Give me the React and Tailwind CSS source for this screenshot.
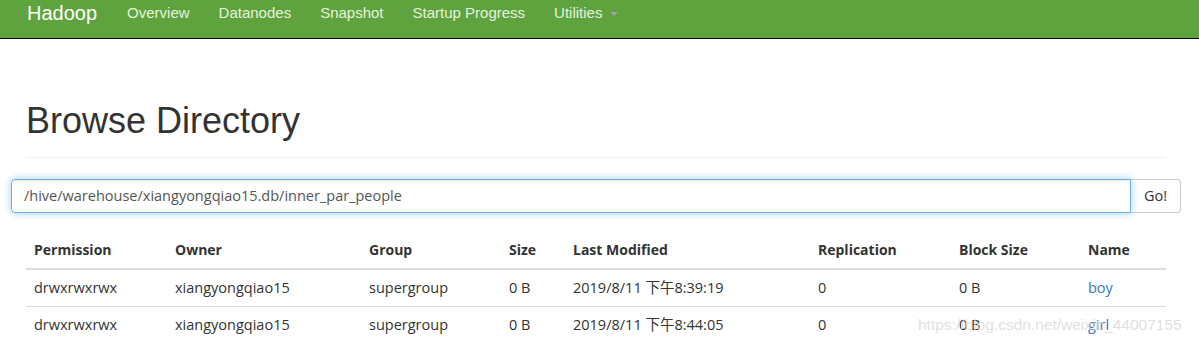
import React from "react";

const navItems = ["Overview", "Datanodes", "Snapshot", "Startup Progress"];

const files = [
  { perm: "drwxrwxrwx", owner: "xiangyongqiao15", group: "supergroup", size: "0 B", modified: "2019/8/11 下午8:39:19", repl: "0", block: "0 B", name: "boy" },
  { perm: "drwxrwxrwx", owner: "xiangyongqiao15", group: "supergroup", size: "0 B", modified: "2019/8/11 下午8:44:05", repl: "0", block: "0 B", name: "girl" },
];

// column widths measured from the screenshot
const cols = ["w-[141px]", "w-[194px]", "w-[140px]", "w-[64px]", "w-[245px]", "w-[141px]", "w-[129px]", ""];

const Navbar = () => (
  <div className="h-[39px] bg-[#5fa33e] border-b border-black flex items-start pt-[3px] font-['Liberation_Sans',Arial,sans-serif]">
    <span className="ml-[27px] text-[20px] leading-[20px] text-white mr-[30px]">Hadoop</span>
    {navItems.map((item) => (
      <span key={item} className="text-[15px] leading-[20px] text-[#e6f2df] mr-[29px]">
        {item}
      </span>
    ))}
    <span className="text-[15px] leading-[20px] text-[#e6f2df] flex items-center">
      Utilities
      <span className="ml-[8px] mt-[2px] w-0 h-0 border-l-[4px] border-r-[4px] border-t-[4px] border-l-transparent border-r-transparent border-t-[#a0a0a0]" />
    </span>
  </div>
);

const App = () => {
  return (
    <div className="relative w-[1199px] h-[343px] bg-white overflow-hidden">
      <Navbar />
      <div className="px-[26px]">
        <h1 className="mt-[62px] text-[36px] leading-[40px] text-[#333] font-['Liberation_Sans',Arial,sans-serif]">
          Browse Directory
        </h1>
        <div className="mt-[16px] mr-[7px] border-t border-[#eee]" />
      </div>
      <div className="mt-[21px] mx-[11px] mr-[18px] flex font-['Open_Sans','Noto_Sans_CJK_SC',sans-serif] text-[14.5px] text-[#555]">
        <div className="flex-1 h-[34px] border border-[#66afe9] rounded-l-[4px] shadow-[inset_0_1px_1px_rgba(0,0,0,0.075),0_0_8px_rgba(102,175,233,0.6)] flex items-center pl-[12px]">
          /hive/warehouse/xiangyongqiao15.db/inner_par_people
        </div>
        <div className="w-[50px] h-[34px] border border-l-0 border-[#ccc] rounded-r-[4px] flex items-center justify-center text-[#333]">
          Go!
        </div>
      </div>
      <div className="mt-[19px] mx-[26px] mr-[33px] font-['Open_Sans','Noto_Sans_CJK_SC',sans-serif] text-[14px] text-[#333]">
        <div className="flex border-b-2 border-[#ddd] font-bold">
          {["Permission", "Owner", "Group", "Size", "Last Modified", "Replication", "Block Size", "Name"].map((h, i) => (
            <div key={h} className={`${cols[i]} px-[8px] py-[8px] leading-[20px]`}>{h}</div>
          ))}
        </div>
        {files.map((f, r) => (
          <div key={f.name} className={`flex text-[14.5px] ${r === 0 ? "border-b border-[#ddd]" : ""}`}>
            {[f.perm, f.owner, f.group, f.size, f.modified, f.repl, f.block].map((v, i) => (
              <div key={i} className={`${cols[i]} px-[8px] py-[8px] leading-[20px]`}>{v}</div>
            ))}
            <div className="px-[8px] py-[8px] leading-[20px] text-[#337ab7]">{f.name}</div>
          </div>
        ))}
      </div>
      <span className="absolute left-[918px] top-[315px] text-[15.5px] leading-[20px] whitespace-nowrap text-[#d8d8d8]/80 font-['Liberation_Sans',Arial,sans-serif] pointer-events-none">
        https://blog.csdn.net/weixin_44007155
      </span>
    </div>
  );
};

export default App;
